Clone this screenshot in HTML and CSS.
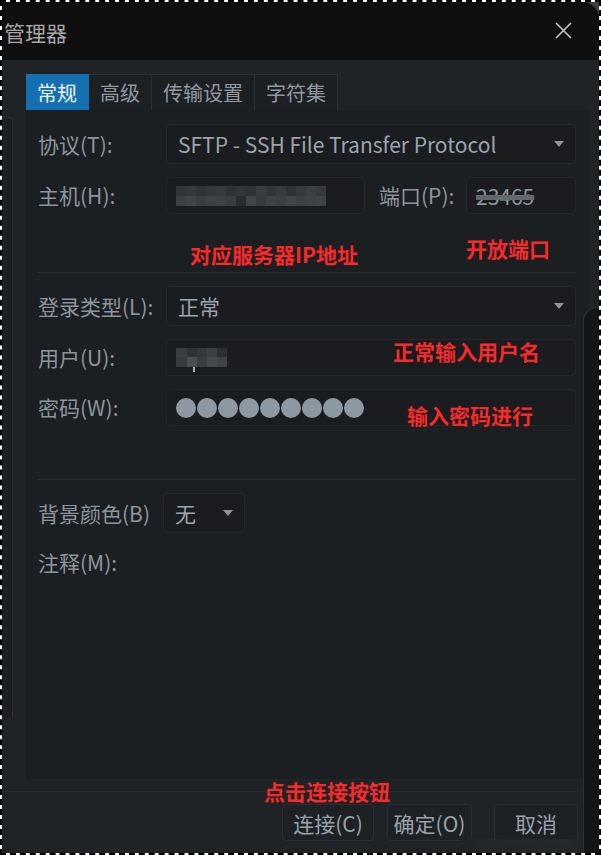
FILE: index.html
```html
<!DOCTYPE html>
<html lang="zh-CN">

<head>
    <meta charset="UTF-8">
    <meta name="viewport" content="width=device-width, initial-scale=1.0">
    <title>管理器</title>
    <link rel="stylesheet" href="styles.css">
</head>

<body>
    <div class="frame">
        <div class="window">
            <div class="titlebar">
                <span class="title">管理器</span>
                <svg class="close" width="17" height="17" viewBox="0 0 17 17">
                    <path d="M1 1 L16 16 M16 1 L1 16" stroke="#c4c4c4" stroke-width="1.6" fill="none"/>
                </svg>
            </div>

            <div class="main">
                <div class="tabs">
                    <div class="tab active">常规</div>
                    <div class="tab">高级</div>
                    <div class="tab">传输设置</div>
                    <div class="tab">字符集</div>
                </div>

                <div class="panel">
                    <div class="row">
                        <span class="label">协议(T):</span>
                        <div class="combo"><span>SFTP - SSH File Transfer Protocol</span><i class="arrow"></i></div>
                    </div>

                    <div class="row">
                        <span class="label">主机(H):</span>
                        <div class="field host"><span class="blur-host"></span></div>
                        <span class="label port-label">端口(P):</span>
                        <div class="field port"><span class="port-num">23465</span></div>
                    </div>

                    <div class="notes"></div>
                    <div class="separator"></div>

                    <div class="row first">
                        <span class="label">登录类型(L):</span>
                        <div class="combo"><span>正常</span><i class="arrow"></i></div>
                    </div>

                    <div class="row">
                        <span class="label">用户(U):</span>
                        <div class="field"><span class="blur-user"></span><span class="cursor"></span></div>
                    </div>

                    <div class="row">
                        <span class="label">密码(W):</span>
                        <div class="field dots">
                            <span class="dot"></span><span class="dot"></span><span class="dot"></span>
                            <span class="dot"></span><span class="dot"></span><span class="dot"></span>
                            <span class="dot"></span><span class="dot"></span><span class="dot"></span>
                        </div>
                    </div>

                    <div class="separator lower"></div>

                    <div class="row first">
                        <span class="label short">背景颜色(B)</span>
                        <div class="combo small"><span>无</span><i class="arrow"></i></div>
                    </div>

                    <div class="row note-row">
                        <span class="label">注释(M):</span>
                    </div>

                    <!-- annotations drawn over the dialog -->
                    <span class="mark mark-ip">对应服务器IP地址</span>
                    <span class="mark mark-port">开放端口</span>
                    <span class="mark mark-user">正常输入用户名</span>
                    <span class="mark mark-pass">输入密码进行</span>
                </div>
            </div>

            <div class="footer">
                <div class="footer-line"></div>
                <div class="buttons">
                    <button class="btn connect">连接(C)</button>
                    <button class="btn ok">确定(O)</button>
                    <button class="btn cancel">取消</button>
                </div>
                <span class="mark mark-connect">点击连接按钮</span>
                <span class="watermark"></span>
            </div>
        </div>

        <div class="behind-left"></div>
        <div class="behind-right"></div>
    </div>
</body>

</html>
```

FILE: styles.css
```css
* {
    box-sizing: border-box;
}

html,
body {
    margin: 0;
    padding: 0;
    background-color: #fff;
}

body {
    font-family: "Noto Sans CJK SC", "Noto Sans", sans-serif;
}

.frame {
    width: 601px;
    height: 855px;
    border: 2px dashed #000;
    background-color: #3b3e41;
    background-clip: padding-box;
    position: relative;
    overflow: hidden;
}

.window {
    height: 100%;
    display: flex;
    flex-direction: column;
    background-color: #202326;
    border-top-right-radius: 17px;
    overflow: hidden;
}

.titlebar {
    height: 58px;
    flex: none;
    background-color: #0f0f0f;
    display: flex;
    align-items: center;
    justify-content: space-between;
    padding: 2px 27px 0 2px;
}

.title {
    color: #a6a6a6;
    font-size: 21px;
    line-height: 1;
}

.close {
    display: block;
    margin-top: -3px;
}

.main {
    height: 719px;
    flex: none;
    padding: 14px 10px 0 24px;
    display: flex;
    flex-direction: column;
}

.tabs {
    display: flex;
    height: 36px;
    flex: none;
}

.tab {
    padding: 0 11px;
    font-size: 20px;
    line-height: 35px;
    color: #8f98a1;
    background-color: #1d2023;
    border: 1px solid #2b2e32;
    border-left: none;
    border-bottom: none;
}

.tab.active {
    background-color: #1570b1;
    border-color: #1570b1;
    color: #eef3f8;
}

.panel {
    flex: 1;
    background-color: #1c1f22;
    padding: 14px 13px 0 12px;
    position: relative;
}

.row {
    display: flex;
    align-items: center;
    margin-bottom: 13px;
}

.row.first {
    margin-top: 13px;
}

.label {
    width: 128px;
    flex: none;
    font-size: 21px;
    color: #8c959e;
    line-height: 1;
}

.label.short {
    width: 125px;
}

.port-label {
    width: 87px;
    margin-left: 14px;
}

.combo {
    flex: 1;
    height: 40px;
    background-color: #1a1c1f;
    border: 1px solid #26292c;
    border-radius: 4px;
    display: flex;
    align-items: center;
    justify-content: space-between;
    padding: 0 11px 0 11px;
    font-size: 21px;
    color: #9ba4ad;
}

.combo.small {
    flex: none;
    width: 82px;
}

.arrow {
    width: 0;
    height: 0;
    border-top: 6px solid #8c949c;
    border-left: 5px solid transparent;
    border-right: 5px solid transparent;
}

.field {
    flex: 1;
    height: 37px;
    background-color: #1a1c1f;
    border: 1px solid #24272a;
    border-radius: 4px;
    display: flex;
    align-items: center;
    padding: 0 9px;
    position: relative;
}

.field.host {
    flex: none;
    width: 199px;
}

.field.port {
    flex: none;
    width: 110px;
}

.port-num {
    font-size: 21px;
    color: #8c959e;
    text-decoration: line-through;
    text-decoration-color: #63686e;
    text-decoration-thickness: 5px;
}

.blur-host {
    width: 150px;
    height: 20px;
    background:
        linear-gradient(90deg, #313438 0 10px, #34373b 10px 20px, #2f3236 20px 30px, #33363a 30px 40px, #36393d 40px 50px, #2d3034 50px 60px, #323539 60px 70px, #2e3135 70px 80px, #3a3d41 80px 90px, #313438 90px 100px, #36393d 100px 110px, #2f3236 110px 120px, #37393d 120px 130px, #3b3e42 130px 140px, #35383c 140px 150px) top / 150px 10px no-repeat,
        linear-gradient(90deg, #3c3f43 0 10px, #404347 10px 20px, #3a3d41 20px 30px, #3e4145 30px 40px, #3d4044 40px 50px, #393c40 50px 60px, #2a2b2d 60px 70px, #404347 70px 80px, #36393d 80px 90px, #3e4145 90px 100px, #3b3e42 100px 110px, #424549 110px 120px, #3c3f43 120px 130px, #3e4145 130px 140px, #3f4246 140px 150px) bottom / 150px 10px no-repeat;
}

.blur-user {
    width: 51px;
    height: 19px;
    background:
        linear-gradient(90deg, #3a3d41 0 11px, #2e3135 11px 21px, #34373b 21px 31px, #3c3f43 31px 41px, #2b2e32 41px 51px) top / 51px 9px no-repeat,
        linear-gradient(90deg, #363a3e 0 11px, #4a4d51 11px 21px, #3a3d41 21px 31px, #45484c 31px 41px, #3e4145 41px 51px) bottom / 51px 10px no-repeat;
}

.cursor {
    position: absolute;
    left: 26px;
    top: 27px;
    width: 2px;
    height: 5px;
    background-color: #9fb2c4;
}

.dots {
    gap: 1px;
    padding-left: 9px;
}

.dot {
    width: 20px;
    height: 20px;
    border-radius: 50%;
    background-color: #8e98a2;
}

.notes {
    height: 58px;
    margin-top: -13px;
}

.separator {
    height: 1px;
    background-color: #2b2e32;
}

.separator.lower {
    margin-top: 53px;
}

.note-row {
    margin-top: 19px;
}

.mark {
    position: absolute;
    font-size: 21px;
    font-weight: bold;
    line-height: 1;
    color: #f72a2a;
    white-space: nowrap;
}

.mark-ip {
    left: 164px;
    top: 134px;
}

.mark-port {
    left: 440px;
    top: 128px;
}

.mark-user {
    left: 367px;
    top: 231px;
}

.mark-pass {
    left: 381px;
    top: 295px;
}

.footer {
    flex: 1;
    position: relative;
}

.footer-line {
    height: 1px;
    margin-top: 12px;
    background-color: #26292d;
}

.buttons {
    display: flex;
    justify-content: flex-end;
    margin-top: 12px;
    padding-right: 21px;
}

.btn {
    height: 37px;
    font-family: inherit;
    font-size: 21px;
    color: #98a1aa;
    background-color: #1e2124;
    border: 1px solid #2a2d31;
    border-radius: 4px;
    padding: 0;
}

.btn.connect {
    width: 92px;
}

.btn.ok {
    width: 85px;
    margin-left: 13px;
}

.btn.cancel {
    width: 84px;
    margin-left: 22px;
}

.mark-connect {
    left: 262px;
    top: 2px;
}

.watermark {
    position: absolute;
    left: 458px;
    bottom: 0;
    width: 134px;
    height: 14px;
    background: linear-gradient(90deg, #202326, #25282b 20%, #23262a 50%, #27292c 80%, #202326);
    opacity: 0.8;
}

.behind-left {
    position: absolute;
    left: 0;
    top: 115px;
    width: 11px;
    height: 600px;
    background-color: #1c1e21;
    border-top: 1px solid #2c2f33;
    border-right: 1px solid #2c2f33;
    border-top-right-radius: 4px;
}

.behind-right {
    position: absolute;
    left: 581px;
    top: 305px;
    width: 18px;
    bottom: 0;
    background-color: #131517;
    border-top: 1px solid #2e3134;
    border-left: 1px solid #2e3134;
    border-top-left-radius: 14px;
}
```
